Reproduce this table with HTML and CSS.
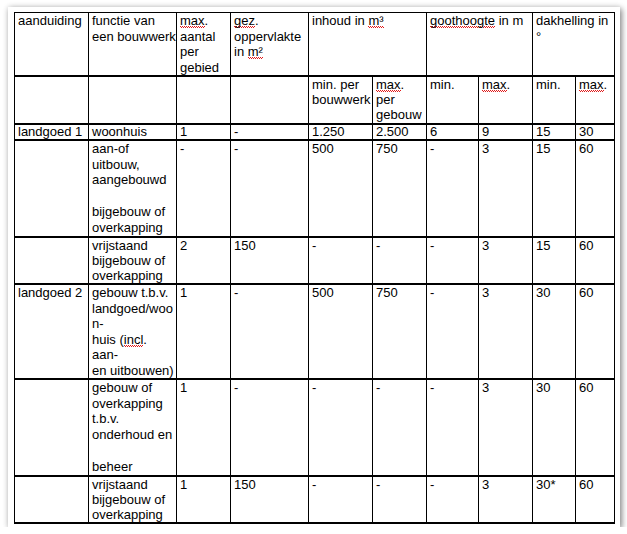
FILE: index.html
```html
<!DOCTYPE html>
<html lang="nl">
<head>
<meta charset="utf-8">
<title>Bouwregels landgoed</title>
<link rel="stylesheet" href="styles.css">
</head>
<body>
<div class="sheet">
<table class="rules">
<colgroup>
<col class="c74"><col class="c88"><col class="c54"><col class="c78"><col class="c64"><col class="c54"><col class="c52"><col class="c54"><col class="c43"><col class="c39">
</colgroup>
<tr class="head1">
<td>aanduiding</td>
<td>functie van<br>een bouwwerk</td>
<td><span class="sp">max</span>.<br>aantal<br>per<br>gebied</td>
<td><span class="sp">gez</span>.<br>oppervlakte<br>in <span class="sp">m²</span></td>
<td colspan="2">inhoud in <span class="sp">m³</span></td>
<td colspan="2"><span class="sp">goothoogte</span> in m</td>
<td colspan="2">dakhelling in<br>°</td>
</tr>
<tr class="head2">
<td></td><td></td><td></td><td></td>
<td>min. per<br>bouwwerk</td>
<td><span class="sp">max</span>.<br>per<br>gebouw</td>
<td>min.</td>
<td><span class="sp">max</span>.</td>
<td>min.</td>
<td><span class="sp">max</span>.</td>
</tr>
<tr class="one">
<td>landgoed 1</td><td>woonhuis</td><td>1</td><td>-</td><td>1.250</td><td>2.500</td><td>6</td><td>9</td><td>15</td><td>30</td>
</tr>
<tr class="six">
<td></td><td>aan-of<br>uitbouw,<br>aangebouwd<br><br>bijgebouw of<br>overkapping</td><td>-</td><td>-</td><td>500</td><td>750</td><td>-</td><td>3</td><td>15</td><td>60</td>
</tr>
<tr class="three">
<td></td><td>vrijstaand<br>bijgebouw of<br>overkapping</td><td>2</td><td>150</td><td>-</td><td>-</td><td>-</td><td>3</td><td>15</td><td>60</td>
</tr>
<tr class="six-short">
<td>landgoed 2</td><td>gebouw t.b.v.<br>landgoed/woo<br>n-<br>huis (<span class="sp">incl</span>.<br>aan-<br>en uitbouwen)</td><td>1</td><td>-</td><td>500</td><td>750</td><td>-</td><td>3</td><td>30</td><td>60</td>
</tr>
<tr class="six">
<td></td><td>gebouw of<br>overkapping<br>t.b.v.<br>onderhoud en<br><br>beheer</td><td>1</td><td>-</td><td>-</td><td>-</td><td>-</td><td>3</td><td>30</td><td>60</td>
</tr>
<tr class="three">
<td></td><td>vrijstaand<br>bijgebouw of<br>overkapping</td><td>1</td><td>150</td><td>-</td><td>-</td><td>-</td><td>3</td><td>30*</td><td>60</td>
</tr>
</table>
</div>
</body>
</html>
```
FILE: styles.css
```css
html, body {
  margin: 0;
  padding: 0;
  background: #ffffff;
}

.sheet {
  box-sizing: border-box;
  width: 612px;
  height: 520px;
  margin: 7px 0 0 8px;
  padding: 5px 0 0 6px;
  background: #ffffff;
  box-shadow: 2px 2px 6px rgba(0, 0, 0, 0.42), 0 0 6px rgba(0, 0, 0, 0.14);
}

.rules {
  table-layout: fixed;
  width: 601px;
  border-collapse: separate;
  border-spacing: 0;
  border-left: 1px solid #000;
  border-top: 1px solid #000;
  font-family: "Liberation Sans", Arial, sans-serif;
  font-size: 13px;
  line-height: 15px;
  color: #000;
}

.rules td {
  box-sizing: border-box;
  padding: 0 0 0 3px;
  vertical-align: top;
  white-space: nowrap;
  overflow: visible;
  border-right: 1px solid #000;
  border-bottom: 2px solid #000;
}

.c74 { width: 74px; }
.c88 { width: 88px; }
.c54 { width: 54px; }
.c78 { width: 78px; }
.c64 { width: 64px; }
.c52 { width: 52px; }
.c43 { width: 43px; }
.c39 { width: 39px; }

.head1 td { height: 64px; line-height: 15.5px; }
.head2 td { height: 48px; }
.one td { height: 16px; line-height: 14px; }
.six td { height: 97px; line-height: 15.7px; }
.six-short td { height: 95px; line-height: 15.5px; }
.three td { height: 47px; }

/* spell-check squiggle: tiny red zigzag of dots under the word */
.sp {
  background-image:
    repeating-linear-gradient(90deg, #e01818 0 1px, transparent 1px 2px),
    repeating-linear-gradient(90deg, transparent 0 1px, #e01818 1px 2px);
  background-size: 100% 1px, 100% 1px;
  background-position: left calc(100% - 1px), left 100%;
  background-repeat: no-repeat;
}
```
